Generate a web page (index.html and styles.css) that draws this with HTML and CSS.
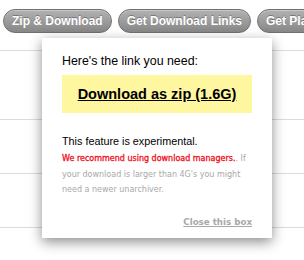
FILE: index.html
```html
<!DOCTYPE html>
<html lang="en">

<head>
    <meta charset="UTF-8">
    <meta name="viewport" content="width=device-width, initial-scale=1.0">
    <title>Download</title>
    <link rel="stylesheet" href="styles.css">
</head>

<body>
    <div class="toolbar">
        <button class="pill">Zip &amp; Download</button>
        <button class="pill">Get Download Links</button>
        <button class="pill">Get Playlist</button>
    </div>

    <div class="rows">
        <div class="row row-tall"></div>
        <div class="row"></div>
        <div class="row"></div>
        <div class="row row-last"></div>
    </div>

    <div class="popup">
        <p class="lead">Here's the link you need:</p>
        <div class="link-box">
            <a href="#" class="zip-link">Download as zip (1.6G)</a>
        </div>
        <p class="note">This feature is experimental.</p>
        <p class="small"><span class="warn">We recommend using download managers.</span>. If your download is larger than 4G's you might need a newer unarchiver.</p>
        <div class="close-row">
            <a href="#" class="close-link">Close this box</a>
        </div>
    </div>
</body>

</html>
```

FILE: styles.css
```css
/* Global Styles */
body {
    font-family: 'Liberation Sans', Arial, sans-serif;
    background-color: #ffffff;
    margin: 0;
    width: 304px;
    height: 260px;
    overflow: hidden;
    position: relative;
}

/* Toolbar */
.toolbar {
    display: flex;
    gap: 6px;
    padding: 9px 3px 0;
    white-space: nowrap;
    overflow: hidden;
}

.pill {
    flex-shrink: 0;
    height: 24px;
    padding: 0 8px;
    border: 1px solid #707070;
    border-radius: 12px;
    background: linear-gradient(#b2b2b2, #878787);
    color: #ffffff;
    font-family: 'Liberation Sans', Arial, sans-serif;
    font-size: 12px;
    font-weight: bold;
    text-shadow: 0 -1px 0 rgba(0, 0, 0, 0.3);
    box-shadow: inset 0 1px 0 rgba(255, 255, 255, 0.3);
}

/* Background rows */
.rows {
    margin-top: 17px;
}

.row {
    height: 53px;
    border-top: 1px solid #dcdcdc;
}

.row-tall {
    height: 68px;
}

.row-last {
    height: 32px;
}

/* Popup */
.popup {
    position: absolute;
    left: 42px;
    top: 38px;
    width: 190px;
    height: 184px;
    padding: 16px 20px 0;
    background: #ffffff;
    box-shadow: 0 4px 12px rgba(0, 0, 0, 0.45);
}

.lead {
    margin: 0;
    font-size: 12.4px;
    line-height: 15px;
    color: #000000;
}

.link-box {
    margin-top: 6px;
    height: 38px;
    display: flex;
    align-items: center;
    justify-content: center;
    background: #fff6a0;
}

.zip-link {
    color: #000000;
    font-size: 14.5px;
    font-weight: bold;
}

.note {
    margin: 21px 0 0;
    font-size: 10.8px;
    line-height: 15px;
    color: #000000;
}

.small {
    margin: 2px 0 0;
    font-family: 'DejaVu Sans', Verdana, sans-serif;
    font-size: 8px;
    line-height: 15.5px;
    color: #a8a8a8;
}

.warn {
    color: #f0101e;
    -webkit-text-stroke: 0.3px #f0101e;
}

.close-row {
    margin-top: 13px;
    text-align: right;
}

.close-link {
    font-family: 'DejaVu Sans', Verdana, sans-serif;
    font-size: 8.7px;
    font-weight: bold;
    color: #a8a8a8;
}
```
